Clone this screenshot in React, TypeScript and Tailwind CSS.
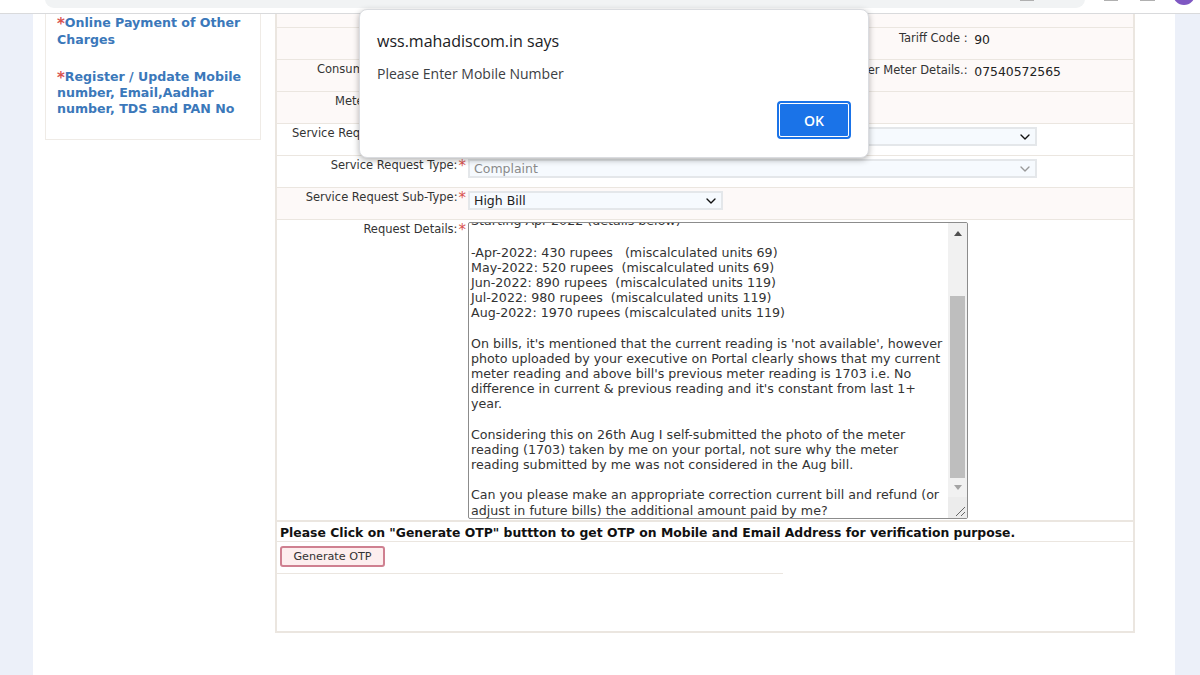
import { ChevronDown } from 'lucide-react';

const verdana = 'font-["DejaVu_Sans",Verdana,sans-serif]';

function Star({ gap }: { gap?: boolean }) {
  return <span className={`align-[-2px] text-[15px] leading-[0] text-[#d9534f] ${gap ? 'ml-[1px]' : ''}`}>*</span>;
}

function Row({ tint, children }: { tint?: boolean; children: React.ReactNode }) {
  return (
    <div className={`flex h-8 shrink-0 border-b border-[#ebe6e0] ${tint ? 'bg-[#fdf9f8]' : 'bg-white'}`}>
      {children}
    </div>
  );
}

function Label({ children, star }: { children?: React.ReactNode; star?: boolean }) {
  return (
    <div className="w-[189px] shrink-0 whitespace-nowrap pt-[1px] text-right text-[11.5px] leading-[16px] text-[#333]">
      {children}
      {star ? <Star gap /> : null}
    </div>
  );
}

function FakeSelect({ w, text, muted }: { w: string; text?: string; muted?: boolean }) {
  return (
    <div
      className={`ml-[2px] mt-[3px] flex h-[19px] ${w} items-center justify-between border-2 border-[#e4e7ea] bg-[#f6fafe] pl-[4px] pr-[2px] text-[12.5px] leading-none ${muted ? 'text-[#8a8a8a]' : 'text-[#222]'}`}
    >
      <span className="mt-[2px]">{text}</span>
      <ChevronDown size={16} strokeWidth={2} className={muted ? 'text-[#999]' : 'text-[#111]'} />
    </div>
  );
}

const details = [
  ['-Apr-2022: 430 rupees   (miscalculated units 69)', 'May-2022: 520 rupees  (miscalculated units 69)', 'Jun-2022: 890 rupees  (miscalculated units 119)', 'Jul-2022: 980 rupees  (miscalculated units 119)', 'Aug-2022: 1970 rupees (miscalculated units 119)'],
  ["On bills, it's mentioned that the current reading is 'not available', however", 'photo uploaded by your executive on Portal clearly shows that my current', "meter reading and above bill's previous meter reading is 1703 i.e. No", "difference in current & previous reading and it's constant from last 1+", 'year.'],
  ['Considering this on 26th Aug I self-submitted the photo of the meter', 'reading (1703) taken by me on your portal, not sure why the meter', 'reading submitted by me was not considered in the Aug bill.'],
  ['Can you please make an appropriate correction current bill and refund (or', 'adjust in future bills) the additional amount paid by me?'],
];

function RequestBox() {
  return (
    <div className="relative ml-[2px] mt-[2px] flex h-[297px] w-[500px] overflow-hidden rounded-[2px] border border-[#8c8c8c] bg-white">
      <div className="min-w-0 flex-1 pl-[2px] text-[12.65px] leading-[15.17px] text-[#333]">
        <div className="-mt-[10px] mb-[16.5px] whitespace-pre">Starting Apr-2022 (details below)</div>
        {details.map((block, i) => (
          <div key={i} className="mb-[15.17px]">
            {block.map((line) => (
              <div key={line} className="whitespace-pre">{line}</div>
            ))}
          </div>
        ))}
      </div>
      <div className="flex w-[19px] shrink-0 flex-col bg-[#f1f1f1]">
        <div className="flex h-[73px] justify-center pt-[8px]">
          <div className="h-0 w-0 border-x-[4px] border-b-[5px] border-x-transparent border-b-[#505050]" />
        </div>
        <div className="mx-[2px] h-[182px] bg-[#bebebe]" />
        <div className="flex h-[19px] justify-center pt-[7px]">
          <div className="h-0 w-0 border-x-[4px] border-t-[5px] border-x-transparent border-t-[#a3a3a3]" />
        </div>
        <div className="flex flex-1 items-end justify-end bg-[#ececec]">
          <svg width="12" height="12" viewBox="0 0 12 12" className="mb-[1px] mr-[1px]">
            <path d="M2 11 L11 2 M7 11 L11 7" stroke="#666" strokeWidth="1" fill="none" />
          </svg>
        </div>
      </div>
    </div>
  );
}

function AlertDialog() {
  return (
    <div className="absolute left-[359px] top-[9px] h-[149px] w-[510px] rounded-[8px] border border-[#dadce0] bg-white font-['Open_Sans',sans-serif] shadow-[0_2px_6px_rgba(0,0,0,0.3)]">
      <div className="ml-[17px] mt-[19px] text-[16px] leading-[24px] text-[#202124]">wss.mahadiscom.in says</div>
      <div className="ml-[17px] mt-[11px] text-[14px] leading-[20px] text-[#3c4043]">Please Enter Mobile Number</div>
      <div className="mr-[17px] mt-[17px] flex justify-end">
        <button className="h-[38px] w-[74px] rounded-[4px] border-2 border-[#1a73e8] bg-[#1a73e8] text-[14px] font-semibold text-white outline outline-1 -outline-offset-[3px] outline-white">
          OK
        </button>
      </div>
    </div>
  );
}

export default function App() {
  return (
    <div className={`relative flex h-[675px] w-[1200px] flex-col overflow-hidden bg-white ${verdana}`}>
      <div className="relative h-[14px] shrink-0 border-b border-[#d9dadc] bg-white">
        <div className="absolute -top-[10px] left-[45px] h-[18px] w-[1040px] rounded-[14px] bg-[#f1f3f4]" />
        <div className="absolute left-[1020px] top-0 h-[1px] w-[14px] bg-[#b0b0b0]" />
        <div className="absolute left-[1104px] top-0 h-[1px] w-[14px] bg-[#b0b0b0]" />
        <div className="absolute left-[1140px] top-0 h-[1px] w-[15px] bg-[#b0b0b0]" />
        <div className="absolute -top-[17px] left-[1173px] h-[22px] w-[22px] rounded-full bg-[#7e57c2]" />
      </div>

      <div className="flex min-h-0 flex-1">
        <div className="w-[33px] shrink-0 bg-[#ecf0f9]" />

        <div className="flex min-w-0 flex-1">
          <aside className="ml-[12px] h-[126px] w-[216px] shrink-0 border-x border-b border-[#efebe6] pl-[11px] text-[12.6px] font-bold text-[#3b78ba]">
            <div className="w-[195px] leading-[17px]">
              <Star />Online Payment of Other Charges
            </div>
            <div className="mt-[20px] w-[195px]">
              <div className="leading-[17px]"><Star />Register / Update Mobile</div>
              <div className="leading-[16px]">number, Email,Aadhar</div>
              <div className="leading-[15px]">number, TDS and PAN No</div>
            </div>
          </aside>

          <main className="ml-[14px] flex h-[619px] w-[860px] flex-col border-x-2 border-b-2 border-[#ebe6e0]">
            <div className="h-[14px] shrink-0 border-b border-[#ebe6e0] bg-[#fdf9f8]" />
            <Row tint>
              <Label />
              <div className="flex-1 pr-[143px] pt-[1px] text-right text-[11.5px] leading-[18px] text-[#333]">
                Tariff Code : <span className="ml-[3px] align-[-2px] text-[12.4px] text-[#222]">90</span>
              </div>
            </Row>
            <Row tint>
              <div className="w-[189px] shrink-0 whitespace-nowrap pl-[40px] pt-[1px] text-[11.5px] leading-[16px] text-[#333]">Consumer</div>
              <div className="flex-1 pr-[72px] pt-[1px] text-right text-[11.5px] leading-[18px] text-[#333]">
                Consumer Meter Details.: <span className="ml-[3px] align-[-2px] text-[12.4px] text-[#222]">07540572565</span>
              </div>
            </Row>
            <Row tint>
              <div className="w-[189px] shrink-0 whitespace-nowrap pl-[58px] pt-[1px] text-[11.5px] leading-[16px] text-[#333]">Meter</div>
            </Row>
            <Row>
              <div className="w-[189px] shrink-0 whitespace-nowrap pl-[15px] pt-[1px] text-[11.5px] leading-[16px] text-[#333]">Service Request</div>
              <FakeSelect w="w-[569px]" />
            </Row>
            <Row>
              <Label star>Service Request Type:</Label>
              <FakeSelect w="w-[569px]" text="Complaint" muted />
            </Row>
            <Row tint>
              <Label star>Service Request Sub-Type:</Label>
              <FakeSelect w="w-[255px]" text="High Bill" />
            </Row>
            <div className="flex h-[302px] shrink-0 border-b-2 border-[#ebe6e0]">
              <Label star>Request Details:</Label>
              <RequestBox />
            </div>
            <div className="h-[20px] shrink-0 border-b border-[#ebe6e0] pl-[3px] text-[12.4px] font-bold leading-[22px] text-[#111]">
              Please Click on "Generate OTP" buttton to get OTP on Mobile and Email Address for verification purpose.
            </div>
            <div className="h-[32px] w-[506px] shrink-0 border-b border-[#ebe6e0] pl-[3px] pt-[1px]">
              <button className="h-[21px] w-[105px] rounded-[3px] border-2 border-[#cf8090] bg-[#fdeeee] text-[11.2px] leading-none text-[#333]">
                Generate OTP
              </button>
            </div>
          </main>
        </div>

        <div className="w-[25px] shrink-0 bg-[#ecf0f9]" />
      </div>

      <AlertDialog />
    </div>
  );
}
